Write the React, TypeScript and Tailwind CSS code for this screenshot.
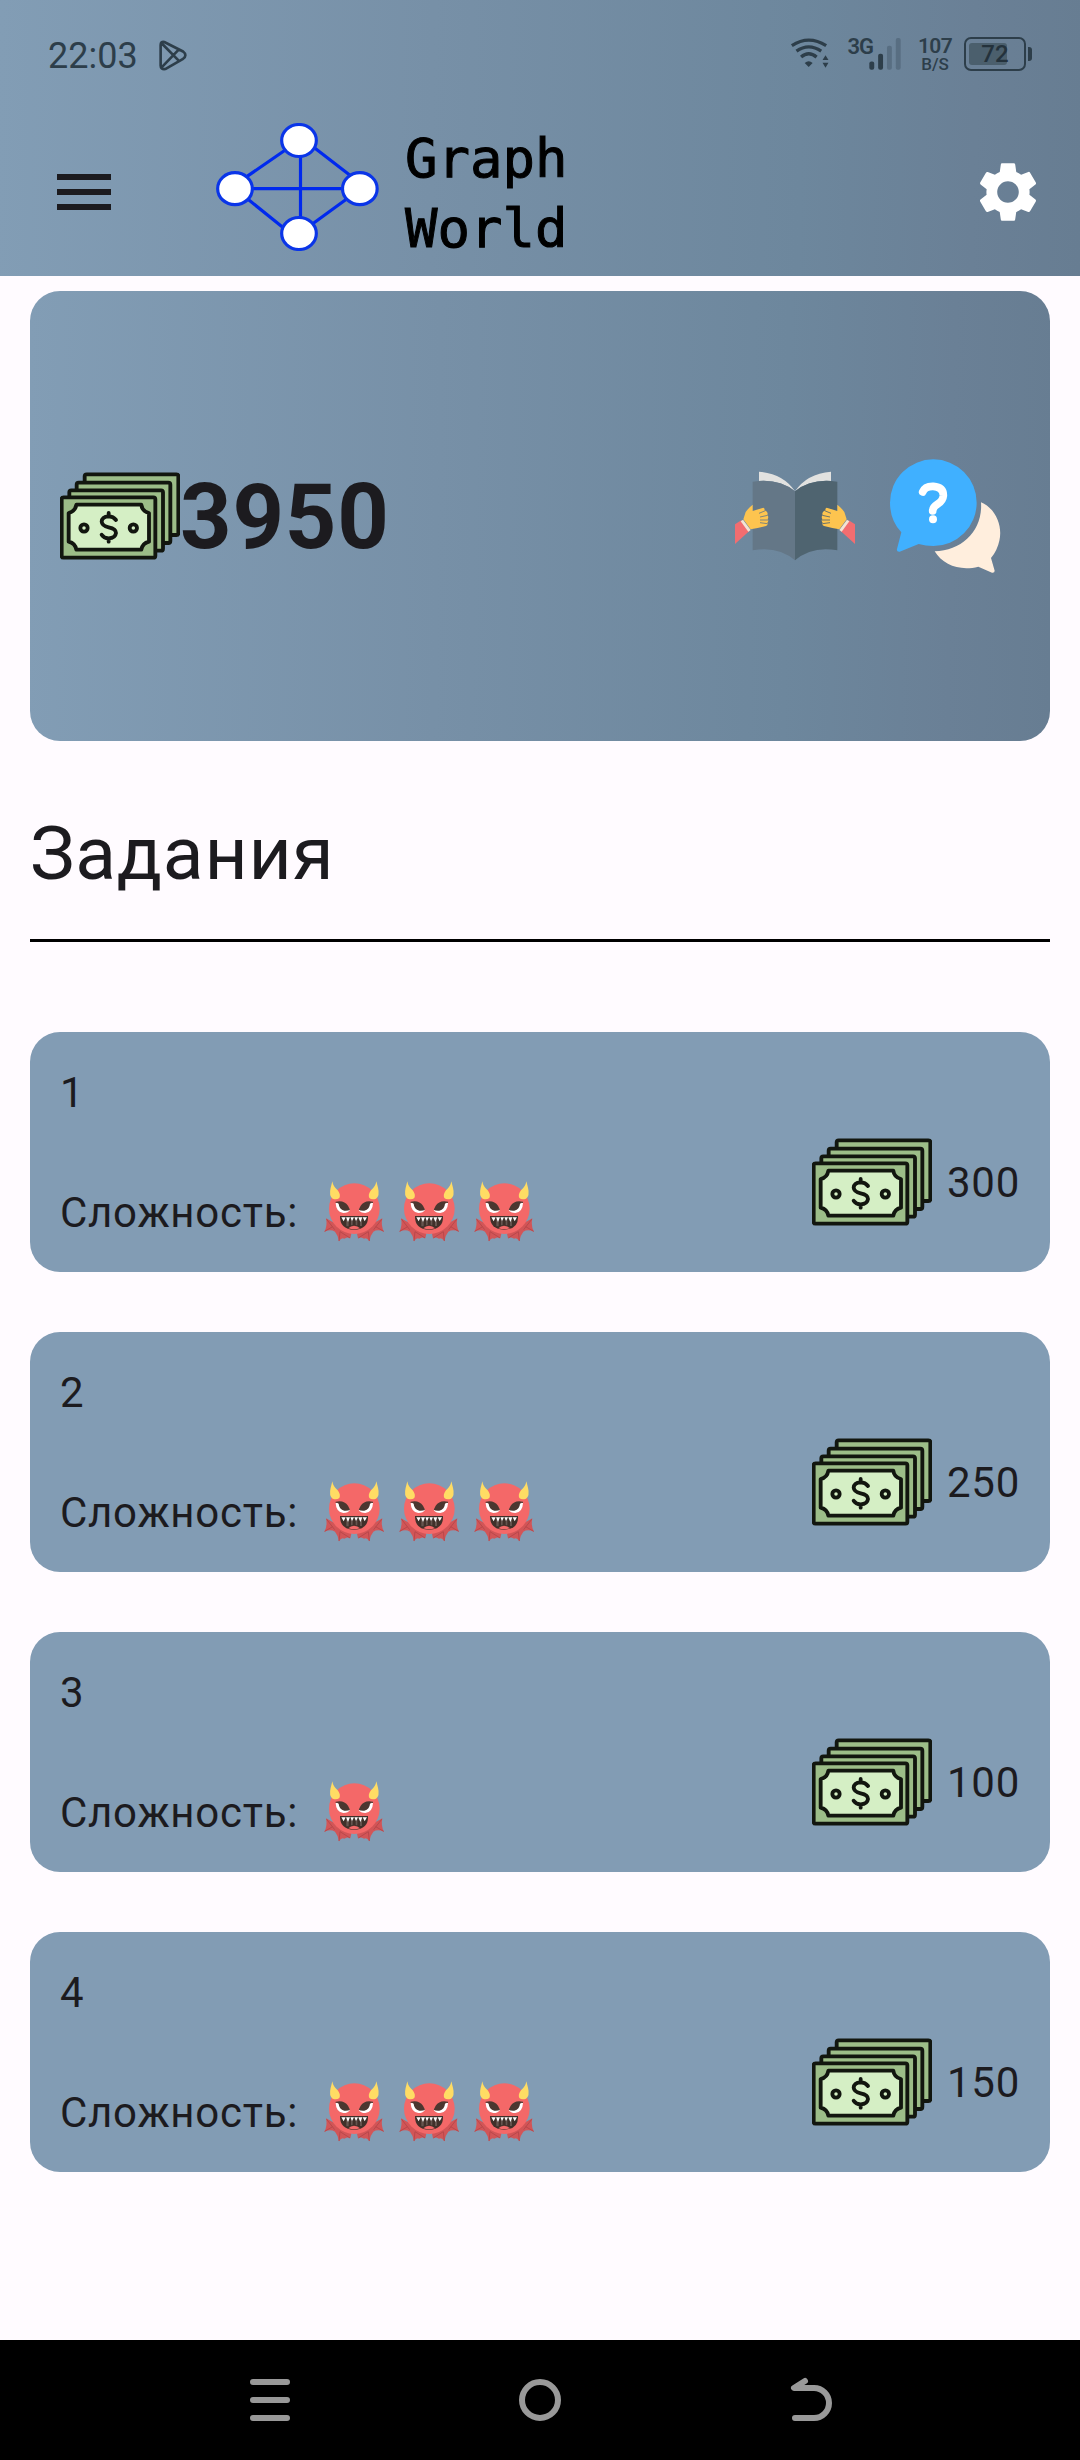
import { MdMenu, MdSettings } from "react-icons/md";

const tasks = [
  { id: 1, difficulty: 3, reward: 300 },
  { id: 2, difficulty: 3, reward: 250 },
  { id: 3, difficulty: 1, reward: 100 },
  { id: 4, difficulty: 3, reward: 150 },
];

function Money() {
  return (
    <svg viewBox="60 17 360 360" className="size-[120px] shrink-0" stroke="#12160f" strokeWidth="11.5" strokeLinejoin="round" strokeLinecap="round">
      <rect x="134" y="72" width="281" height="182" rx="6" fill="#9cbd88" />
      <rect x="110" y="97" width="281" height="181" rx="6" fill="#9cbd88" />
      <rect x="88" y="120" width="281" height="181" rx="6" fill="#9cbd88" />
      <rect x="65" y="141" width="281" height="181" rx="6" fill="#9cbd88" />
      <path d="M109 163H304Q306 183 327 188V274Q307 279 304 298H109Q106 279 86 274V188Q106 183 109 163Z" fill="#d5efc5" />
      <circle cx="132" cy="233" r="11" fill="none" />
      <circle cx="280" cy="233" r="11" fill="none" />
      <path d="M206 188V198M206 264V274M228 209Q220 198 206 198Q186 199 185 214Q186 227 206 231Q228 235 228 248Q226 263 206 264Q191 263 185 253" fill="none" />
    </svg>
  );
}

function DevilHalf() {
  return (
    <g>
      <path d="M78 176Q98 190 120 194L154 222L151 236Q144 231 133 237Q125 232 117 245Q115 228 105 216Q92 208 73 216Q83 199 78 176Z" fill="#d25557" />
      <path d="M80 179L104 210M74 215L98 201M117 244L120 216L150 235" stroke="#b9484b" strokeWidth="3" fill="none" />
    </g>
  );
}

function DevilEye() {
  return (
    <g>
      <path d="M97 65Q99 80 113 92Q123 105 118 115Q110 122 98 117Q86 108 92 84Z" fill="#ffdc64" />
      <path d="M107 130Q125 128 150 150Q145 160 130 160Q108 157 107 130Z" fill="#fff" />
      <path d="M107 126Q132 120 144 138L150 150Q144 154 133 153Q117 148 116 132Q112 128 107 130Z" fill="#4b3730" />
    </g>
  );
}

function Devil() {
  return (
    <svg viewBox="72 64 180 180" className="size-[60px] overflow-visible">
      <DevilHalf />
      <g transform="translate(325 0) scale(-1 1)">
        <DevilHalf />
      </g>
      <circle cx="163" cy="147" r="76" fill="#f46868" />
      <DevilEye />
      <g transform="translate(326 0) scale(-1 1)">
        <DevilEye />
      </g>
      <path d="M120 169H204Q206 209 162 210Q119 209 120 169Z" fill="#40302a" />
      <path d="M139 178H146V200H139ZM153 176H158V197H153ZM167 176H172V197H167ZM180 178H186V199H180Z" fill="#66554f" />
      <path d="M145 206Q152 198 162 198Q173 198 180 206Q162 212 145 206Z" fill="#f46868" />
      <path d="M124 173H137L131 185ZM138 173H150L144 187ZM151 173H162L156 184ZM163 173H174L168 184ZM175 173H187L181 187ZM188 173H201L194 185Z" fill="#fff" />
    </svg>
  );
}

function Hand({ gap }: { gap: string }) {
  return (
    <g>
      <path d="M45 252L64 240L88 272L45 311Z" fill="#f26d70" />
      <path d="M62 243L69 238L92 269L85 274Z" fill="#f3e4d4" />
      <path d="M98 193V212L130 202Q136 205 133 209L139 213Q145 218 142 224Q147 230 143 236Q147 242 142 247Q145 254 138 257L113 263L92 267L70 237L77 215Q86 202 98 193Z" fill="#fdc44f" />
      <path d="M136 211L117 219M143 225L120 230M144 239H120M142 250L120 247" stroke={gap} strokeWidth="2.5" fill="none" />
    </g>
  );
}

function Book() {
  return (
    <svg viewBox="45 47 360 360" className="size-[120px]">
      <path d="M117 94Q190 100 225 153Q180 118 117 122Z" fill="#e2e2e0" />
      <path d="M333 94Q260 100 225 153Q270 118 333 122Z" fill="#e2e2e0" />
      <path d="M98 124Q177 112 225 153V360Q174 316 98 330Z" fill="#647787" />
      <path d="M352 124Q273 112 225 153V360Q276 316 352 330Z" fill="#4f6470" />
      <Hand gap="#647787" />
      <g transform="translate(450 0) scale(-1 1)">
        <Hand gap="#4f6470" />
      </g>
    </svg>
  );
}

function Chat() {
  return (
    <svg viewBox="495 47 360 360" className="size-[120px]">
      <path d="M783 186C830 206 848 260 838 301Q832 330 813 353L824 391Q824 398 816 397L775 379C721 393 669 375 644 333C727 331 789 270 783 186Z" fill="#ffeedd" />
      <path d="M640 57A130 130 0 1 1 640 317Q617 317 596 311L539 334Q529 335 531 326L544 276Q510 240 510 187A130 130 0 0 1 640 57Z" fill="#40b0ff" />
      <path d="M608 155Q615 137 640 138Q671 141 670 166Q669 181 652 192Q638 201 638 212" stroke="#fff" strokeWidth="23" strokeLinecap="round" fill="none" />
      <circle cx="639" cy="237" r="12" fill="#fff" />
    </svg>
  );
}

function Logo() {
  return (
    <svg viewBox="48 69 489 384" className="-mt-[10px] ml-[96px] h-[128px] w-[163px]" stroke="#0a35e8" strokeWidth="9.5">
      <path d="M140 230L256 150M345 145L449 225M144 298L250 383M334 374L440 297M158 266H424M301.500 170V352" stroke="#0029ee" fill="none" />
      <ellipse cx="297" cy="121.500" rx="52" ry="48" fill="#fff" />
      <ellipse cx="105" cy="266" rx="52" ry="48" fill="#fff" />
      <ellipse cx="479.500" cy="266" rx="52" ry="48" fill="#fff" />
      <ellipse cx="297" cy="400.500" rx="52" ry="48" fill="#fff" />
    </svg>
  );
}

function StatusBar() {
  return (
    <div className="flex h-[108px] items-start justify-between pr-[48px] pl-12 text-[#2d3e4a]">
      <div className="flex items-center pt-[35px]">
        <span className="text-[36px] leading-[42px]">22:03</span>
        <svg viewBox="474 112 92 100" className="-mt-[2px] ml-[20px] h-[33px] w-[31px]" fill="none" stroke="#2d3e4a" strokeWidth="8" strokeLinejoin="round" strokeLinecap="round">
          <path d="M481 130Q481 119 492 121L549 150Q563 161 549 172L495 203Q481 205 481 192ZM484 125L535 177M484 198L535 145" />
        </svg>
      </div>
      <div className="flex items-start pt-[36px]">
        <svg viewBox="90 112 120 100" className="h-[33px] w-[40px]" fill="none" stroke="#2d3e4a" strokeWidth="10">
          <path d="M95 141Q146 108 199 141M109 158Q146 132 184 158M123 176Q146 156 170 176" />
          <path d="M134 194Q146 183 158 194L146 206ZM188 185L197 170L206 185ZM188 193L197 208L206 193Z" fill="#2d3e4a" stroke="none" />
        </svg>
        <span className="ml-[17px] text-[22px] leading-[21px] font-semibold tracking-[-1px]">3G</span>
        <svg viewBox="327 113 96 98" className="mt-[2px] -ml-[4px] h-[32px] w-[32px]" fill="#2d3e4a">
          <rect x="327" y="185" width="15" height="25" rx="6" />
          <rect x="354" y="161" width="15" height="49" rx="6" />
          <rect x="381" y="137" width="15" height="73" rx="6" fill="#586e82" />
          <rect x="408" y="113" width="15" height="97" rx="6" fill="#586e82" />
        </svg>
        <div className="ml-[17px] flex w-[34px] flex-col items-center font-semibold">
          <span className="text-[21px] leading-[20px] tracking-[-0.7px]">107</span>
          <span className="text-[17px] leading-[17px] font-medium">B/S</span>
        </div>
        <div className="mt-px ml-[12px] flex items-center">
          <div className="relative flex h-[34px] w-[62px] items-center justify-center rounded-[7px] border-[2.5px] border-[#2d3e4a]">
            <div className="absolute top-[4px] left-[3px] h-[22px] w-[38px] rounded-[3px] bg-[#4b5f6d]" />
            <span className="relative text-[24px] leading-none font-medium text-[#24323c]">72</span>
          </div>
          <div className="ml-[2px] h-[14px] w-[4px] rounded-r-[3px] bg-[#2d3e4a]" />
        </div>
      </div>
    </div>
  );
}

export default function App() {
  return (
    <div className="flex h-[2460px] w-[1080px] flex-col bg-[#fffbff] font-['Roboto',sans-serif] text-[#1c1b1f]">
      <header className="h-[276px] bg-[linear-gradient(91deg,#829db5_0%,#7790a7_40%,#6d879d_74%,#6a8096_90%,#677d92_100%)]">
        <StatusBar />
        <div className="flex h-[168px] items-center pr-9 pl-12">
          <MdMenu className="size-[72px]" />
          <Logo />
          <div className="mt-[4px] ml-[26px] font-['DejaVu_Sans_Mono',monospace] text-[54px] leading-[70px] text-black [-webkit-text-stroke:1px_black]">
            <div>Graph</div>
            <div>World</div>
          </div>
          <MdSettings className="ml-auto size-[72px] text-white" />
        </div>
      </header>

      <main className="flex-1 px-[30px] pt-[15px]">
        <section className="flex h-[450px] items-center rounded-[30px] bg-[linear-gradient(91deg,#829db5_0%,#7790a7_40%,#6d879d_74%,#6a8096_90%,#677d92_100%)] px-[30px]">
          <Money />
          <span className="pt-[4px] text-[90px] leading-none font-bold tracking-[0.75px]">3950</span>
          <div className="ml-auto flex gap-[30px] pr-[15px]">
            <Book />
            <Chat />
          </div>
        </section>

        <h1 className="mt-[67px] h-[131px] text-[75px] leading-[90px] tracking-[0.75px]">Задания</h1>
        <div className="h-[3px] bg-black" />

        <div className="mt-[90px] flex flex-col gap-[60px]">
          {tasks.map((task) => (
            <section key={task.id} className="flex h-60 items-end justify-between rounded-[30px] bg-[#829cb4] p-[30px] text-[42px] leading-[60px] tracking-[0.75px]">
              <div className="flex h-full flex-col justify-between">
                <span className="pt-px">{task.id}</span>
                <div className="flex h-[60px] items-center">
                  <span className="w-[264px] pt-[2px]">Сложность:</span>
                  <div className="-mt-[2px] flex gap-[15px]">
                    {Array.from({ length: task.difficulty }, (_, i) => (
                      <Devil key={i} />
                    ))}
                  </div>
                </div>
              </div>
              <div className="flex items-center gap-[15px]">
                <Money />
                <span className="pt-[2px]">{task.reward}</span>
              </div>
            </section>
          ))}
        </div>
      </main>

      <nav className="flex h-[120px] items-center justify-between bg-black px-[249px]">
        <svg viewBox="0 0 42 42" className="size-[42px]" stroke="#999" strokeWidth="6" strokeLinecap="round">
          <path d="M4 3H38M4 21H38M4 39H38" />
        </svg>
        <svg viewBox="0 0 42 42" className="size-[42px]" stroke="#999" strokeWidth="6" fill="none">
          <circle cx="21" cy="21" r="18" />
        </svg>
        <svg viewBox="0 0 42 42" className="size-[42px] overflow-visible" stroke="#999" strokeWidth="6" strokeLinecap="round" strokeLinejoin="round" fill="none">
          <path d="M16 2L5 9H25A15 15 0 0 1 25 39H6" />
        </svg>
      </nav>
    </div>
  );
}
